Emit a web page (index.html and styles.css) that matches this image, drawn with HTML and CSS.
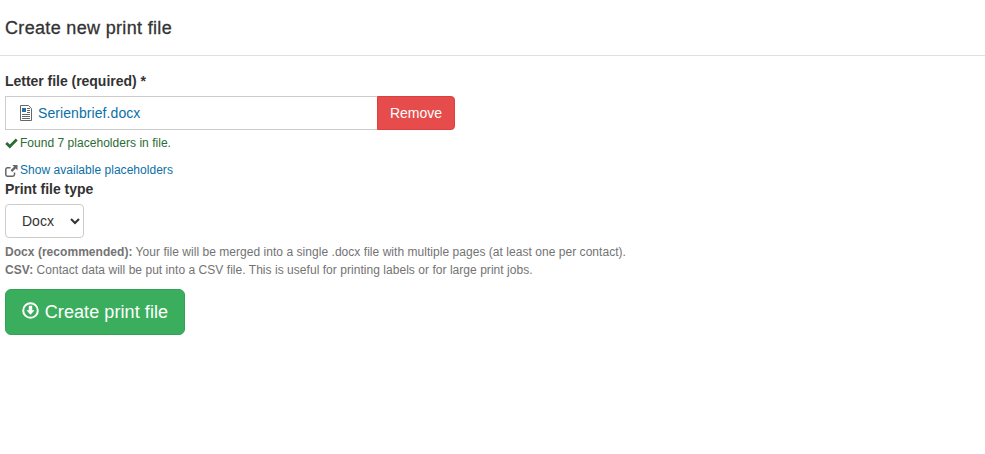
FILE: index.html
```html
<!DOCTYPE html>
<html lang="en">
<head>
<meta charset="utf-8">
<title>Create new print file</title>
<link rel="stylesheet" href="styles.css">
</head>
<body>
<header class="page-header"><h1>Create new print file</h1></header>
<main class="content">
  <label class="label">Letter file (required) *</label>
  <div class="file-group">
    <div class="file-box">
      <svg class="file-icon" width="12" height="16" viewBox="0 0 12 16">
        <path d="M.5.500h8l3 3v12H.5z" fill="#fff" stroke="#666"/>
        <path d="M2 3h4v4H2z" fill="#2f6da8"/>
        <path d="M7 3.500h3M7 5.500h3M7 7.500h3M2 9.500h8M2 11.500h8M2 13.500h8" stroke="#666" fill="none"/>
      </svg>
      <a class="file-link" href="#">Serienbrief.docx</a>
    </div>
    <button class="btn-remove" type="button">Remove</button>
  </div>
  <p class="found">
    <svg class="check" width="13" height="11" viewBox="0 0 13 11"><path d="M.3 6 2.200 4l2.600 2.600L10.800.4l1.900 2-7.900 8.200z" fill="#2b6b34"/></svg>
    Found 7 placeholders in file.
  </p>
  <p class="show">
    <svg class="ext" width="13" height="12" viewBox="0 0 13 12">
      <path d="M9.500 7.500v2A1.700 1.700 0 0 1 7.800 11.200H2.500A1.700 1.700 0 0 1 .8 9.500V4.500A1.700 1.700 0 0 1 2.500 2.800H5.500" fill="none" stroke="#666" stroke-width="1.500"/>
      <path d="M7.300 0h5.200V5.200L10.700 3.400 7.200 6.900 5.600 5.300 9.100 1.800z" fill="#666"/>
    </svg>
    <a href="#">Show available placeholders</a>
  </p>
  <label class="label type-label">Print file type</label>
  <select class="type-select"><option>Docx</option><option>CSV</option></select>
  <p class="help"><strong>Docx (recommended):</strong> Your file will be merged into a single .docx file with multiple pages (at least one per contact).<br><strong>CSV:</strong> Contact data will be put into a CSV file. This is useful for printing labels or for large print jobs.</p>
  <button class="btn-create" type="button">
    <svg class="create-icon" width="17" height="17" viewBox="0 0 17 17"><circle cx="8.500" cy="8.500" r="7.300" fill="none" stroke="#fff" stroke-width="2"/><path d="M6.800 3.800h3.400v4.400h2.300L8.500 12.800 4.500 8.200h2.300z" fill="#fff"/></svg>
    Create print file
  </button>
</main>
</body>
</html>
```

FILE: styles.css
```css
* { box-sizing: border-box; }
html, body { margin: 0; padding: 0; }
body {
  background: #fff;
  color: #333;
  font-family: "Liberation Sans", Arial, sans-serif;
  font-size: 14px;
  line-height: 20px;
}
.page-header {
  height: 56px;
  padding: 17px 5px 0;
  border-bottom: 1px solid #e0e0e0;
}
.page-header h1 {
  margin: 0;
  font-size: 18px;
  font-weight: 400;
  line-height: 22px;
  letter-spacing: 0.33px;
  color: #333;
  -webkit-text-stroke: 0.3px #333;
}
.content { padding: 15px 5px 0; }
.label {
  display: block;
  font-weight: 700;
  line-height: 20px;
  margin-bottom: 5px;
  letter-spacing: -0.03px;
}
.file-group { display: flex; width: 450px; height: 34px; }
.file-box {
  flex: 1;
  display: flex;
  align-items: center;
  gap: 6px;
  padding-left: 14px;
  border: 1px solid #ccc;
  border-right: 0;
  background: #fff;
}
.file-icon { display: block; }
.file-link { color: #0b6fa8; text-decoration: none; font-size: 14px; letter-spacing: 0.08px; }
.btn-remove {
  width: 78px;
  border: 1px solid #d9403f;
  border-radius: 0 4px 4px 0;
  background: #e74c4c;
  color: #fff;
  font: 14px "Liberation Sans", Arial, sans-serif;
  padding: 0;
}
.found {
  margin: 3px 0 0;
  font-size: 12px;
  line-height: 20px;
  color: #2b6b34;
  display: flex;
  align-items: center;
  gap: 2px;
  letter-spacing: 0.03px;
}
.show {
  margin: 9px 0 0;
  font-size: 12px;
  line-height: 17px;
  display: flex;
  align-items: center;
  gap: 2px;
  letter-spacing: 0.03px;
}
.show a { color: #0b6fa8; text-decoration: none; }
.type-label { margin-top: 0; margin-bottom: 5px; }
.type-select {
  display: block;
  width: 79px;
  height: 34px;
  padding: 0 0 0 12px;
  border: 1px solid #ccc;
  border-radius: 4px;
  background: #fff;
  color: #333;
  font: 14px "Liberation Sans", Arial, sans-serif;
}
.help {
  margin: 5px 0 0;
  font-size: 12px;
  line-height: 18px;
  color: #737373;
  letter-spacing: 0.04px;
}
.btn-create {
  display: flex;
  align-items: center;
  justify-content: center;
  gap: 6px;
  width: 180px;
  height: 46px;
  margin-top: 10px;
  padding: 0;
  border: 1px solid #34a156;
  border-radius: 6px;
  background: #3aae5d;
  color: #fff;
  font: 18px "Liberation Sans", Arial, sans-serif;
  letter-spacing: 0.08px;
}
.create-icon { margin-bottom: 4px; }
```
